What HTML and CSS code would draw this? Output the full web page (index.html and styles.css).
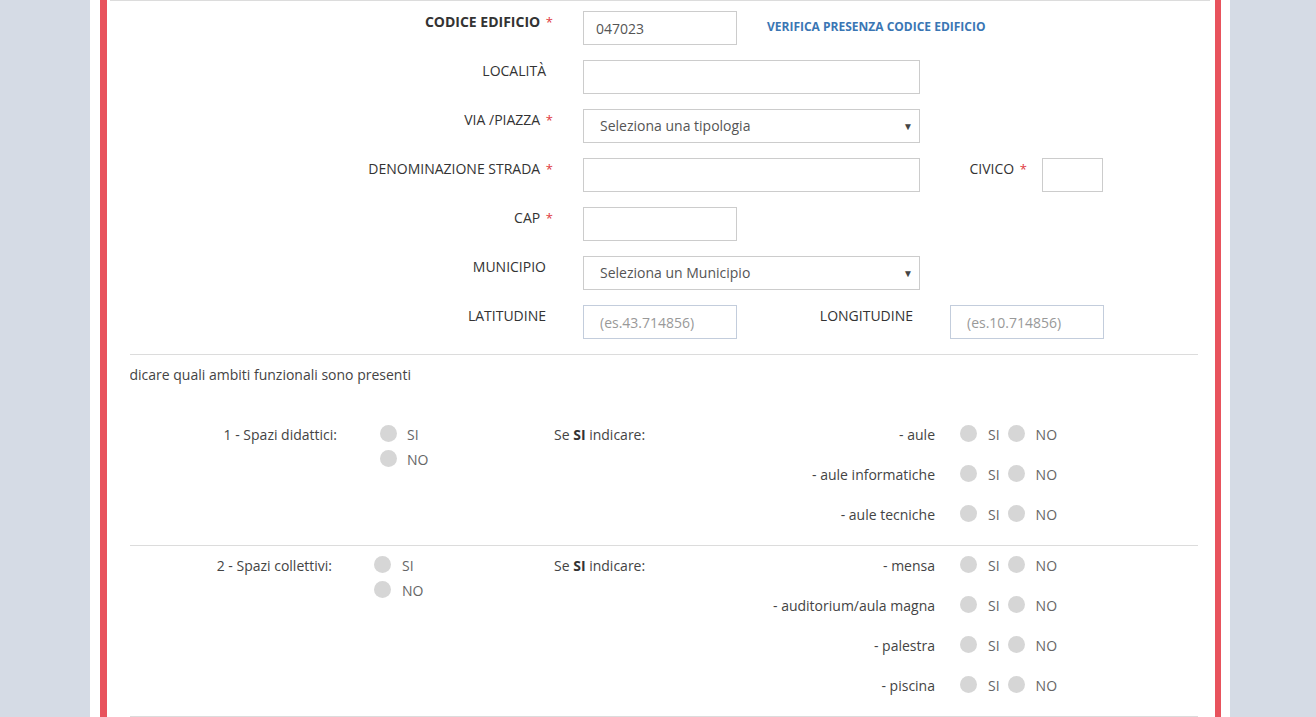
FILE: index.html
```html
<!DOCTYPE html>
<html>
  <head>
      <meta charset="utf-8">
      <title>Scheda edificio</title>
      <link rel="stylesheet" href="styles.css">
  </head>
  <body>
      <div id="page">
        <div id="frame">
          <div class="form">
            <div class="frow">
              <label class="flabel req bold">CODICE EDIFICIO <span class="star">*</span></label>
              <input class="fin short" type="text" value="047023">
              <a class="verify" href="#">VERIFICA PRESENZA CODICE EDIFICIO</a>
            </div>
            <div class="frow">
              <label class="flabel">LOCALITÀ</label>
              <input class="fin long" type="text">
            </div>
            <div class="frow">
              <label class="flabel req">VIA /PIAZZA <span class="star">*</span></label>
              <div class="fsel"><span>Seleziona una tipologia</span><span class="arrow">▼</span></div>
            </div>
            <div class="frow">
              <label class="flabel req">DENOMINAZIONE STRADA <span class="star">*</span></label>
              <input class="fin long" type="text">
              <label class="flabel req civ">CIVICO <span class="star">*</span></label>
              <input class="fin tiny" type="text">
            </div>
            <div class="frow">
              <label class="flabel req">CAP <span class="star">*</span></label>
              <input class="fin short" type="text">
            </div>
            <div class="frow">
              <label class="flabel">MUNICIPIO</label>
              <div class="fsel"><span>Seleziona un Municipio</span><span class="arrow">▼</span></div>
            </div>
            <div class="frow">
              <label class="flabel">LATITUDINE</label>
              <input class="fin short geo" type="text" placeholder="(es.43.714856)">
              <label class="flabel lon">LONGITUDINE</label>
              <input class="fin short geo" type="text" placeholder="(es.10.714856)">
            </div>
          </div>

          <div class="sect">
            <div class="intro">Indicare quali ambiti funzionali sono presenti</div>
            <div class="qrow first">
              <div class="lbl">1 - Spazi didattici:</div>
              <div class="radios">
                <div class="opt"><span class="dot"></span>SI</div>
                <div class="opt"><span class="dot"></span>NO</div>
              </div>
              <div class="cond">Se <b>SI</b> indicare:</div>
              <div class="sub">
                <div class="srow"><div class="slbl">- aule</div><div class="opt"><span class="dot"></span>SI</div><div class="opt"><span class="dot"></span>NO</div></div>
                <div class="srow"><div class="slbl">- aule informatiche</div><div class="opt"><span class="dot"></span>SI</div><div class="opt"><span class="dot"></span>NO</div></div>
                <div class="srow"><div class="slbl">- aule tecniche</div><div class="opt"><span class="dot"></span>SI</div><div class="opt"><span class="dot"></span>NO</div></div>
              </div>
            </div>
          </div>

          <div class="sect">
            <div class="qrow two">
              <div class="lbl">2 - Spazi collettivi:</div>
              <div class="radios">
                <div class="opt"><span class="dot"></span>SI</div>
                <div class="opt"><span class="dot"></span>NO</div>
              </div>
              <div class="cond">Se <b>SI</b> indicare:</div>
              <div class="sub">
                <div class="srow"><div class="slbl">- mensa</div><div class="opt"><span class="dot"></span>SI</div><div class="opt"><span class="dot"></span>NO</div></div>
                <div class="srow"><div class="slbl">- auditorium/aula magna</div><div class="opt"><span class="dot"></span>SI</div><div class="opt"><span class="dot"></span>NO</div></div>
                <div class="srow"><div class="slbl">- palestra</div><div class="opt"><span class="dot"></span>SI</div><div class="opt"><span class="dot"></span>NO</div></div>
                <div class="srow"><div class="slbl">- piscina</div><div class="opt"><span class="dot"></span>SI</div><div class="opt"><span class="dot"></span>NO</div></div>
              </div>
            </div>
          </div>

          <div class="sect"></div>
        </div>
      </div>
  </body>
</html>
```

FILE: styles.css
```css
*{
  margin:0;
  padding:0;
  box-sizing:border-box;
}
html,body{
  height:100%;
  overflow:hidden;
}
body{
  background:#d5dbe5;
  font-family:"Open Sans","Liberation Sans",sans-serif;
  font-size:14px;
  line-height:20px;
  color:#333;
}
#page{
  width:1140px;
  margin-left:90px;
  height:100%;
  background:#fff;
  padding:0 9px 0 10px;
}
#frame{
  height:100%;
  border-left:7px solid #e8535d;
  border-right:6px solid #e8535d;
}

/* form anagrafica */
.form{
  margin:0 5px 0 3px;
  border-top:1px solid #dcdcdc;
  padding-top:10px;
}
.frow{
  display:flex;
  align-items:flex-start;
  margin-bottom:15px;
}
.flabel{
  width:443px;
  margin-right:30px;
  padding:1px 7px 0 0;
  text-align:right;
  color:#333;
}
.flabel.req{
  padding-right:0;
}
.bold{
  font-weight:700;
}
.star{
  color:#e0393e;
  font-weight:400;
  font-size:13px;
  margin-left:2px;
}
.flabel.civ{
  width:107px;
  margin-right:15px;
}
.flabel.lon{
  width:183px;
}
.fin{
  height:34px;
  border:1px solid #ccc;
  padding:6px 12px;
  font-family:inherit;
  font-size:14px;
  line-height:20px;
  color:#555;
  background:#fff;
  outline:none;
}
.fin::placeholder{
  color:#999;
}
.short{
  width:154px;
}
.long{
  width:337px;
}
.tiny{
  width:61px;
}
.geo{
  border-color:#c3cddc;
  padding-left:16px;
}
.verify{
  margin:6px 0 0 30px;
  font-size:12px;
  font-weight:700;
  color:#3a76b4;
  text-decoration:none;
}
.fsel{
  width:337px;
  height:34px;
  border:1px solid #ccc;
  padding:6px 6px 6px 16px;
  display:flex;
  justify-content:space-between;
  align-items:center;
  color:#555;
}
.fsel .arrow{
  font-size:10px;
  color:#444;
}

/* ambiti funzionali */
.sect{
  margin:0 17px 0 23px;
  border-top:1px solid #dcdcdc;
  padding:10px 0 20px;
}
.intro{
  overflow:hidden;
  white-space:nowrap;
  text-indent:-13px;
  color:#444;
}
.qrow{
  display:flex;
  align-items:flex-start;
}
.qrow.first{
  margin-top:40px;
}
.lbl{
  width:207px;
  margin-right:43px;
  text-align:right;
  color:#444;
}
.radios{
  width:174px;
}
.qrow.two .lbl{
  width:202px;
  margin-right:42px;
}
.qrow.two .radios{
  width:180px;
}
.radios .opt{
  margin-bottom:5px;
}
.radios .dot{
  margin-right:10px;
}
.qrow.two .radios .dot{
  margin-right:11px;
}
.opt{
  display:flex;
  align-items:flex-start;
  color:#666;
}
.dot{
  width:17px;
  height:17px;
  border-radius:100%;
  background:#d6d6d6;
  margin-right:11px;
}
.cond{
  width:200px;
  color:#444;
}
.cond b{
  color:#333;
}
.srow{
  display:flex;
  align-items:flex-start;
  margin-bottom:20px;
}
.srow:last-child{
  margin-bottom:0;
}
.slbl{
  width:181px;
  margin-right:25px;
  text-align:right;
  color:#444;
}
.srow .opt + .opt{
  margin-left:8px;
}
```
